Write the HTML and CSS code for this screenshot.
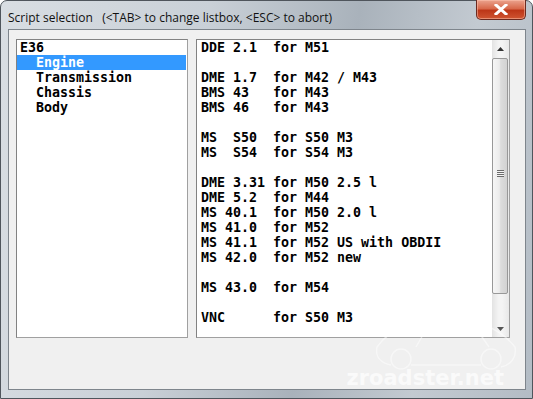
FILE: index.html
```html
<!DOCTYPE html>
<html lang="en">
  <head>
    <meta charset="UTF-8" />
    <meta name="viewport" content="width=device-width, initial-scale=1.0" />
    <title>Script selection</title>

    <link rel="stylesheet" href="styles.css">
  </head>
  <body>
    <div class="window">
      <div class="titlebar">
        <span class="title">Script selection &nbsp; (&lt;TAB&gt; to change listbox, &lt;ESC&gt; to abort)</span>
        <span class="close">
          <svg width="14" height="11" viewBox="0 0 14 11">
            <path d="M2 1 L12 10 M12 1 L2 10" stroke="#fff" stroke-width="3" stroke-linecap="square" />
          </svg>
        </span>
      </div>

      <div class="client">
        <ul class="listbox groups">
          <li>E36</li>
          <li class="sub selected">Engine</li>
          <li class="sub">Transmission</li>
          <li class="sub">Chassis</li>
          <li class="sub">Body</li>
        </ul>

        <div class="listbox scripts">
          <ul class="rows">
            <li>DDE 2.1  for M51</li>
            <li></li>
            <li>DME 1.7  for M42 / M43</li>
            <li>BMS 43   for M43</li>
            <li>BMS 46   for M43</li>
            <li></li>
            <li>MS  S50  for S50 M3</li>
            <li>MS  S54  for S54 M3</li>
            <li></li>
            <li>DME 3.31 for M50 2.5 l</li>
            <li>DME 5.2  for M44</li>
            <li>MS 40.1  for M50 2.0 l</li>
            <li>MS 41.0  for M52</li>
            <li>MS 41.1  for M52 US with OBDII</li>
            <li>MS 42.0  for M52 new</li>
            <li></li>
            <li>MS 43.0  for M54</li>
            <li></li>
            <li>VNC      for S50 M3</li>
          </ul>

          <div class="scrollbar">
            <span class="arrow">
              <svg width="7" height="4" viewBox="0 0 7 4"><path d="M0 4 L3.5 0 L7 4 Z" fill="#333" /></svg>
            </span>
            <div class="track">
              <div class="thumb">
                <span class="grip"></span>
              </div>
            </div>
            <span class="arrow">
              <svg width="7" height="4" viewBox="0 0 7 4"><path d="M0 0 L3.5 4 L7 0 Z" fill="#555" /></svg>
            </span>
          </div>
        </div>

        <!-- faint site watermark -->
        <svg class="car" width="150" height="70" viewBox="0 0 150 70">
          <path d="M6 40 C20 20 50 8 80 10 C105 12 130 22 144 40 C146 50 140 58 130 60 M6 40 C4 50 10 56 20 58 M40 58 L110 58 M60 14 L45 40 M100 14 L118 40" fill="none" stroke="rgba(255,255,255,0.8)" stroke-width="1.5" />
          <circle cx="30" cy="52" r="10" fill="none" stroke="rgba(255,255,255,0.8)" stroke-width="1.5" />
          <circle cx="120" cy="52" r="10" fill="none" stroke="rgba(255,255,255,0.8)" stroke-width="1.5" />
        </svg>
        <div class="watermark">zroadster.net</div>
      </div>
    </div>
  </body>
</html>
```

FILE: styles.css
```css
* {
  margin: 0;
  padding: 0;
  box-sizing: border-box;
}

html,
body {
  width: 533px;
  height: 399px;
  overflow: hidden;
  background: #fff;
}

.window {
  width: 533px;
  height: 399px;
  display: flex;
  flex-direction: column;
  border: 1px solid #4f555c;
  border-radius: 7px 7px 0 0;
  background: linear-gradient(100deg, #d9dee3 0%, #c9d0d7 35%, #a9b2bb 60%, #c3cad1 80%, #b3bcc5 100%);
  padding: 0 6px 8px 7px;
}

.titlebar {
  height: 28px;
  display: flex;
  justify-content: space-between;
  align-items: flex-start;
}

.title {
  font-family: "Open Sans", "Noto Sans", sans-serif;
  font-size: 12px;
  color: #111;
  margin-top: 8px;
  white-space: pre;
}

.close {
  width: 50px;
  height: 20px;
  margin-top: -1px;
  display: flex;
  align-items: center;
  justify-content: center;
  border: 1px solid #6b2a20;
  border-top: none;
  border-radius: 0 0 5px 5px;
  background: linear-gradient(#eba38e 0%, #d8694b 45%, #bd3618 55%, #cf5532 100%);
  box-shadow: inset 0 0 0 1px rgba(255, 200, 180, 0.5);
}

.client {
  flex: 1;
  position: relative;
  display: flex;
  gap: 8px;
  align-items: flex-start;
  background: #f0f0f0;
  border: 1px solid #7e858c;
  padding: 9px 14px 0 7px;
  overflow: hidden;
}

.listbox {
  height: 299px;
  background: #fff;
  border: 1px solid #a0a0a0;
  border-top-color: #828282;
  border-left-color: #828282;
  font-family: "DejaVu Sans Mono", monospace;
  font-weight: bold;
  font-size: 13.3px;
  line-height: 15px;
  color: #000;
  list-style: none;
}

.groups {
  width: 172px;
  padding: 0 1px 0 0;
}

.groups li {
  height: 15px;
  padding-left: 3px;
  white-space: pre;
}

.groups .sub {
  padding-left: 19px;
}

.groups .selected {
  background: #3399ff;
  color: #fff;
}

.scripts {
  width: 314px;
  display: flex;
}

.rows {
  flex: 1;
  list-style: none;
  padding-left: 4px;
}

.rows li {
  height: 15px;
  white-space: pre;
}

.scrollbar {
  width: 17px;
  display: flex;
  flex-direction: column;
  background: linear-gradient(90deg, #e3e3e3, #f4f4f4 40%, #f4f4f4 60%, #e8e8e8);
}

.arrow {
  height: 17px;
  display: flex;
  align-items: center;
  justify-content: center;
}

.track {
  flex: 1;
  padding: 1px 1px 0 0;
}

.thumb {
  height: 236px;
  display: flex;
  align-items: center;
  justify-content: center;
  border: 1px solid #989898;
  border-radius: 2px;
  background: linear-gradient(90deg, #f6f6f6, #ececec 45%, #dcdcdc 55%, #d2d2d2);
}

.grip {
  width: 7px;
  height: 7px;
  margin-top: -5px;
  background: repeating-linear-gradient(#6b6b6b 0 1px, #f4f4f4 1px 2px);
}

.car {
  position: absolute;
  right: 4px;
  bottom: 12px;
  opacity: 0.6;
}

.watermark {
  position: absolute;
  right: 21px;
  bottom: -1px;
  font-family: "DejaVu Sans", sans-serif;
  font-weight: bold;
  font-size: 21px;
  color: rgba(255, 255, 255, 0.7);
}
```
